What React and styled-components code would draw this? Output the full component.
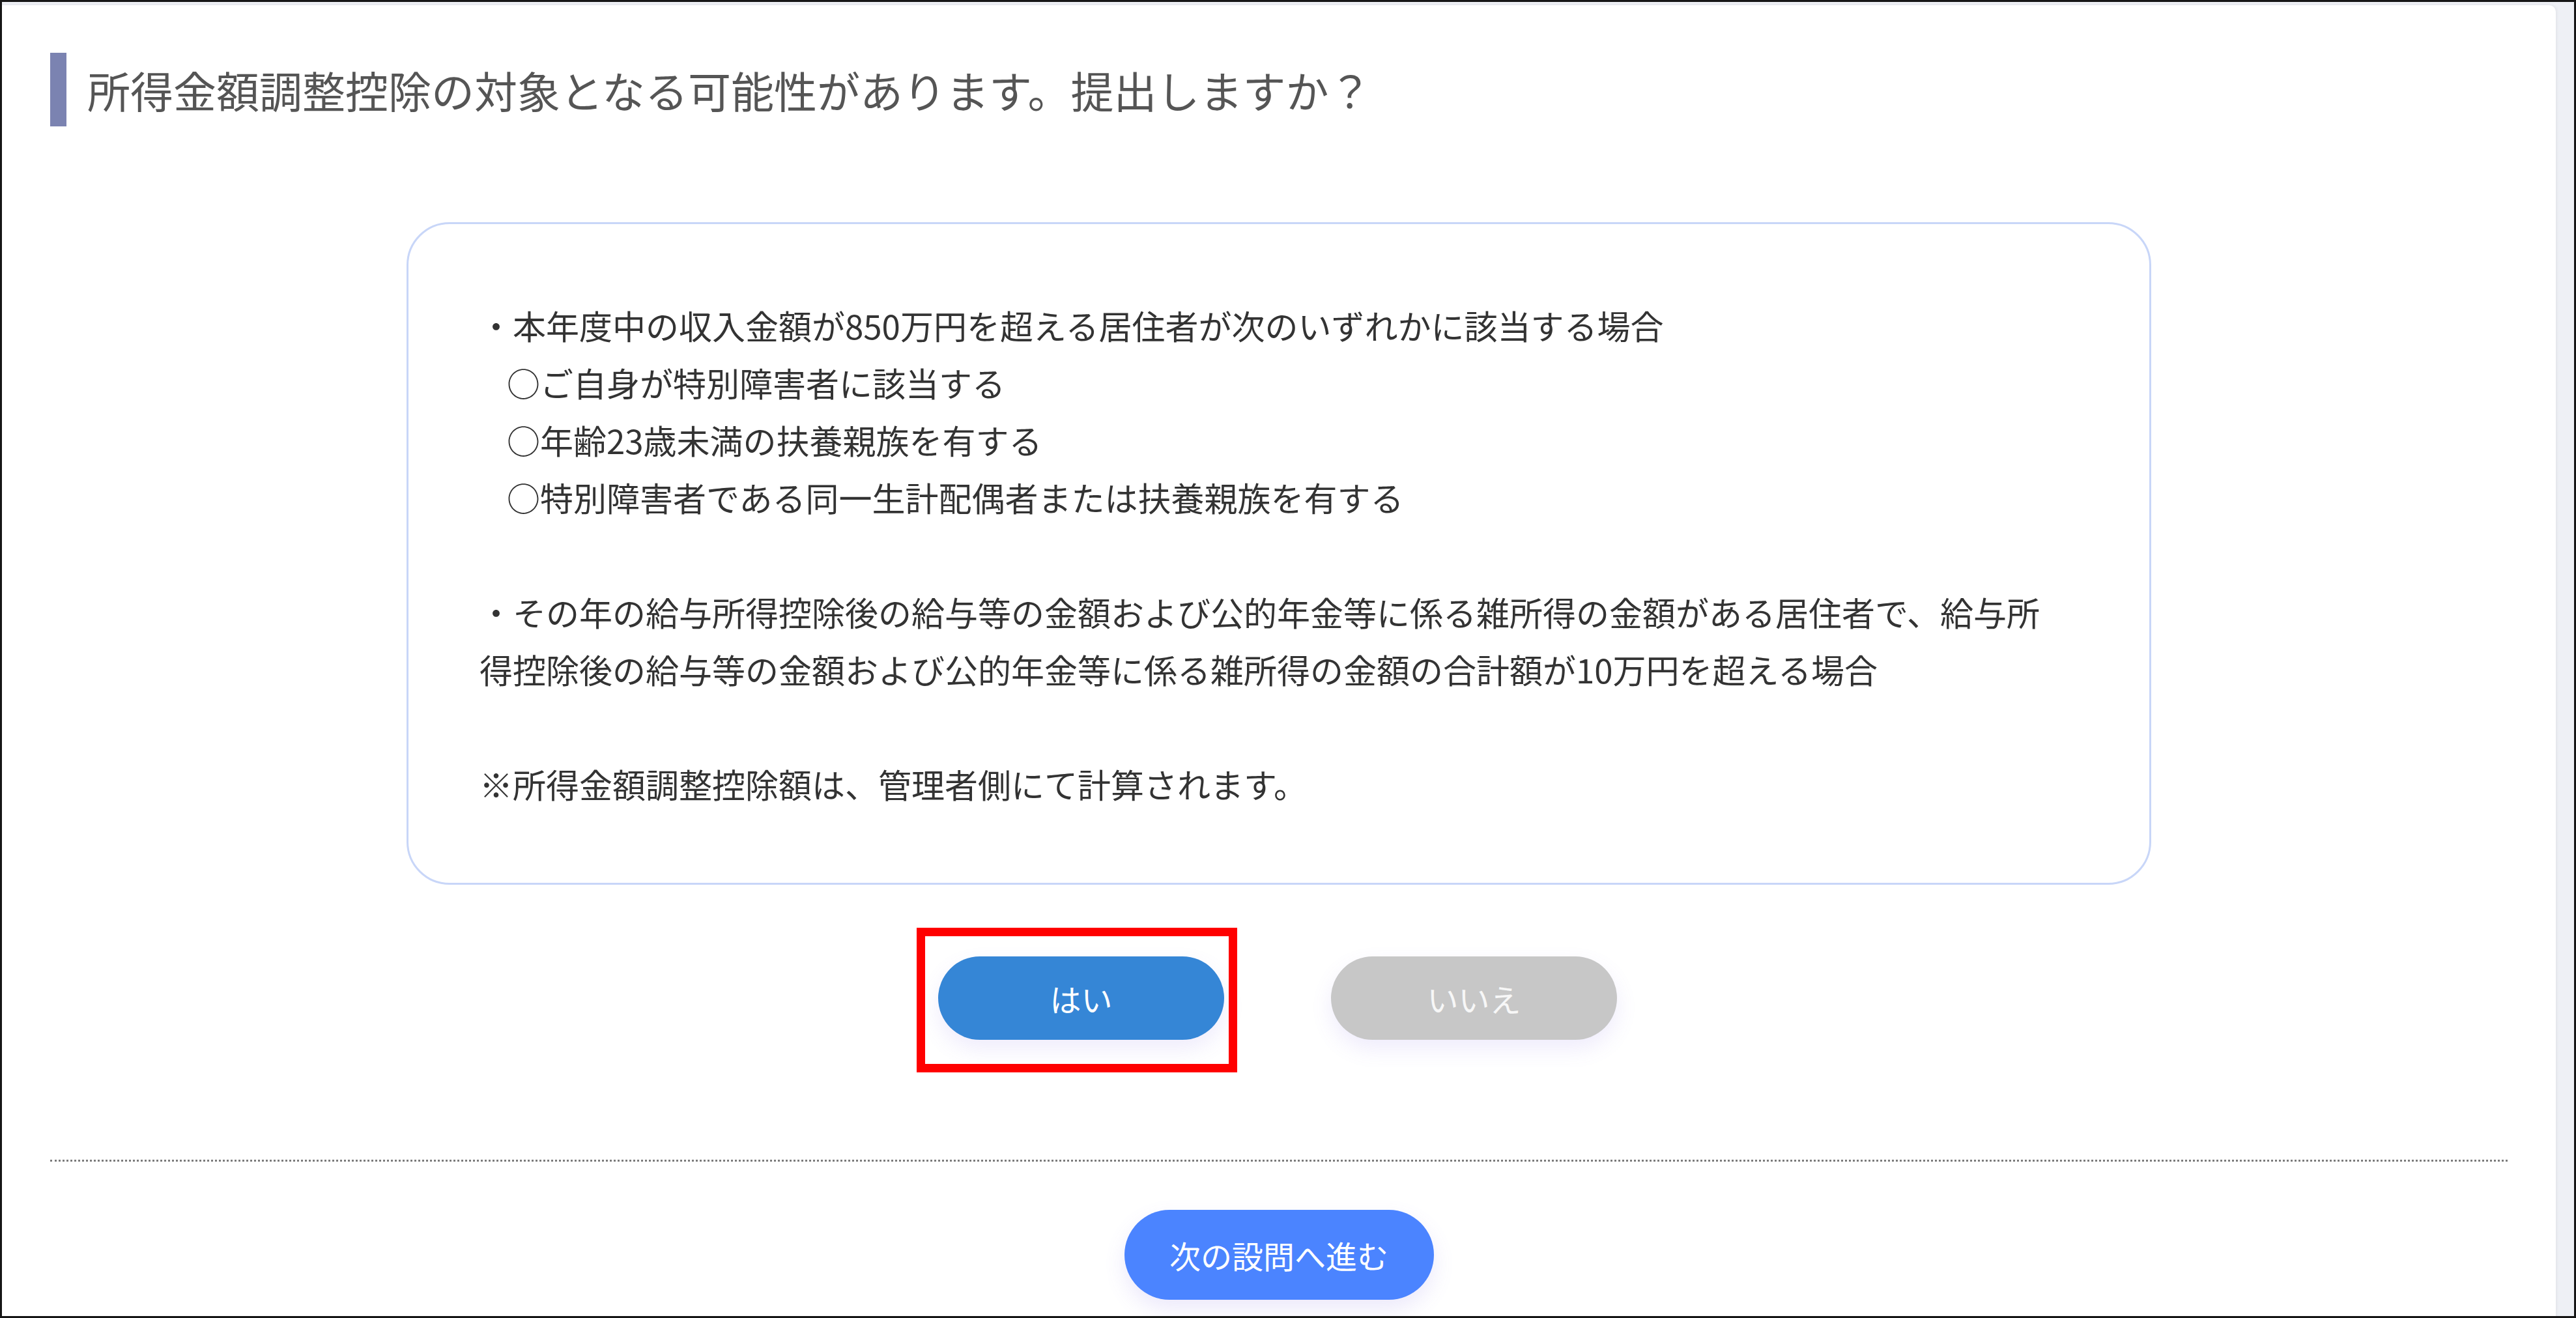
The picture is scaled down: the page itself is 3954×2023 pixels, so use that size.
import styled, { createGlobalStyle } from "styled-components"

const GlobalStyle = createGlobalStyle`
    html, body {
        margin: 0;
        padding: 0;
        background: #fff;
    }
    body {
        font-family: "Noto Sans CJK JP", "Noto Sans", sans-serif;
    }
`;

const Frame = styled.div`
    width: 3954px;
    height: 2023px;
    box-sizing: border-box;
    border: 3px solid #161616;
    background: #eef0f5;
    padding: 5px 28px 0 0;
    overflow: hidden;
`;

const Panel = styled.div`
    background: #fff;
    border-radius: 0 10px 0 0;
    box-shadow: 1px 0 5px rgba(0,0,0,0.07);
    padding: 73px 74px 40px;
    min-height: 100%;
`;

const Title = styled.h2`
    margin: 0;
    border-left: 25px solid #7b83b1;
    padding-left: 32px;
    font-size: 66px;
    font-weight: 400;
    line-height: 113px;
    color: #555;
    white-space: nowrap;
`;

const InfoCard = styled.div`
    width: 2678px;
    box-sizing: border-box;
    margin: 147px auto 0;
    border: 3px solid #c8d6f8;
    border-radius: 66px;
    padding: 111px 109px 108px;
    font-size: 51px;
    line-height: 88px;
    color: #333;
`;

const Line = styled.div`
    white-space: nowrap;
    padding-left: ${p => p.$indent ? "42px" : "0"};
`;

const Blank = styled.div`
    height: 88px;
`;

const ButtonRow = styled.div`
    display: flex;
    justify-content: center;
    align-items: flex-start;
    gap: 144px;
    margin-top: 66px;
    padding-right: 37px;
`;

const Highlight = styled.div`
    border: 13px solid #ff0000;
    padding: 31px 7px 37px 20px;
`;

const PillButton = styled.button`
    width: 439px;
    height: 128px;
    border: none;
    border-radius: 64px;
    background: ${p => p.$active ? "#3586d6" : "#c7c7c7"};
    color: ${p => p.$active ? "#fff" : "#f7f7f7"};
    font-family: inherit;
    font-size: 48px;
    box-shadow: 0 14px 32px rgba(120,100,230,0.12);
    margin-top: ${p => p.$active ? "0" : "44px"};
    cursor: pointer;
`;

const Divider = styled.hr`
    margin: 134px 0 0;
    border: none;
    border-top: 3px dotted #7c7c7c;
    height: 0;
`;

const NextButton = styled.button`
    display: block;
    margin: 74px auto 0;
    width: 475px;
    height: 138px;
    border: none;
    border-radius: 69px;
    background: #4b84ff;
    color: #fff;
    font-family: inherit;
    font-size: 48px;
    box-shadow: 0 14px 32px rgba(120,100,230,0.14);
    cursor: pointer;
`;

const conditions = [
    "○ご自身が特別障害者に該当する",
    "○年齢23歳未満の扶養親族を有する",
    "○特別障害者である同一生計配偶者または扶養親族を有する",
]

const App = () => {
    return (
        <>
            <GlobalStyle />
            <Frame>
                <Panel>
                    <Title>所得金額調整控除の対象となる可能性があります。提出しますか？</Title>
                    <InfoCard>
                        <Line>・本年度中の収入金額が850万円を超える居住者が次のいずれかに該当する場合</Line>
                        {conditions.map(c => <Line key={c} $indent>{c}</Line>)}
                        <Blank />
                        <Line>・その年の給与所得控除後の給与等の金額および公的年金等に係る雑所得の金額がある居住者で、給与所</Line>
                        <Line>得控除後の給与等の金額および公的年金等に係る雑所得の金額の合計額が10万円を超える場合</Line>
                        <Blank />
                        <Line>※所得金額調整控除額は、管理者側にて計算されます。</Line>
                    </InfoCard>
                    <ButtonRow>
                        <Highlight>
                            <PillButton $active>はい</PillButton>
                        </Highlight>
                        <PillButton>いいえ</PillButton>
                    </ButtonRow>
                    <Divider />
                    <NextButton>次の設問へ進む</NextButton>
                </Panel>
            </Frame>
        </>
    )
}

export default App
